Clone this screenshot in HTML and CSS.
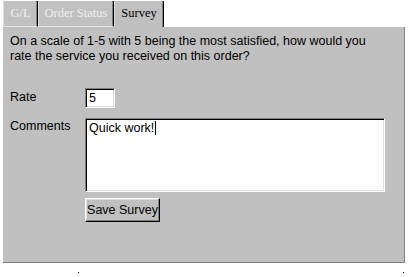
FILE: index.html
```html
<!DOCTYPE html>
<html>
<head>
<meta charset="utf-8">
<link rel="stylesheet" href="styles.css">
</head>
<body>
<div class="window">
  <div class="tabs">
    <div class="tab tab-gl">G/L</div>
    <div class="tab tab-order">Order Status</div>
    <div class="tab tab-survey active">Survey</div>
  </div>
  <div class="panel">
    <p class="prompt">On a scale of 1-5 with 5 being the most satisfied, how would you<br>rate the service you received on this order?</p>
    <div class="form">
      <div class="label label-rate">Rate</div>
      <div class="field-rate">5</div>
      <div class="label label-comments">Comments</div>
      <div class="field-comments">Quick work!<span class="caret"></span></div>
      <div class="spacer"></div>
      <div class="actions"><button class="btn">Save Survey</button></div>
    </div>
  </div>
  <div class="foot"><span class="dot dot-left"></span><span class="dot dot-right"></span></div>
</div>
</body>
</html>
```

FILE: styles.css
```css
html, body {
  margin: 0;
  padding: 0;
  background: #ffffff;
}

body {
  font-family: "Liberation Sans", Arial, sans-serif;
  font-size: 12.5px;
  color: #000;
}

.window {
  margin-left: 3px;
  width: 402px;
}

.tabs {
  display: flex;
  padding-top: 1px;
  height: 26px;
}

.tab {
  box-sizing: border-box;
  height: 26px;
  background: #c0c0c0;
  font-family: "Liberation Serif", "Times New Roman", serif;
  font-size: 12.5px;
  line-height: 25px;
  text-align: center;
  color: #efefef;
  border-left: 1px solid #dcdcdc;
  border-right: 1px solid #000;
  border-bottom: 1px solid #e4e4e4;
  box-shadow: inset -1px 0 0 #808080;
}

.tab-gl { width: 35px; }
.tab-order { width: 76px; }
.tab-survey { width: 50px; }

.tab.active {
  color: #000;
  border-bottom: none;
}

.panel {
  box-sizing: border-box;
  height: 236px;
  background: #c0c0c0;
  border-right: 1px solid #808080;
  border-bottom: 1px solid #808080;
  padding: 7px 7px 0 7px;
}

.prompt {
  margin: 0 0 24px 0;
  line-height: 15px;
}

.form {
  display: grid;
  grid-template-columns: 75px auto;
  align-items: start;
}

.label {
  line-height: 15px;
}

.label-rate { margin-top: 2px; }
.label-comments { margin-top: 11px; }

.field-rate,
.field-comments {
  box-sizing: border-box;
  background: #fff;
  border-top: 1px solid #808080;
  border-left: 1px solid #808080;
  border-right: 1px solid #ffffff;
  border-bottom: 1px solid #ffffff;
  box-shadow: inset 1px 1px 0 #000, inset -1px -1px 0 #dfdfdf;
  padding-left: 3px;
  line-height: 15px;
}

.field-rate {
  width: 30px;
  height: 20px;
  padding-top: 2px;
}

.field-comments {
  margin-top: 10px;
  width: 300px;
  height: 74px;
  padding-top: 2px;
}

.caret {
  display: inline-block;
  width: 1px;
  height: 14px;
  background: #000;
  vertical-align: -3px;
  margin-left: 1px;
}

.actions {
  margin-top: 6px;
}

.btn {
  box-sizing: border-box;
  width: 75px;
  height: 24px;
  margin: 0;
  padding: 0;
  background: #c0c0c0;
  font-family: "Liberation Sans", Arial, sans-serif;
  font-size: 12.5px;
  color: #000;
  border-top: 1px solid #ffffff;
  border-left: 1px solid #ffffff;
  border-right: 1px solid #000;
  border-bottom: 1px solid #000;
  box-shadow: inset -1px -1px 0 #808080, inset 1px 1px 0 #dfdfdf;
}

.foot {
  display: flex;
  height: 14px;
  padding-top: 9px;
  box-sizing: border-box;
}

.dot {
  width: 1px;
  height: 1px;
  background: #000;
}

.dot-left { margin-left: 75px; }
.dot-right { margin-left: 324px; }
```
